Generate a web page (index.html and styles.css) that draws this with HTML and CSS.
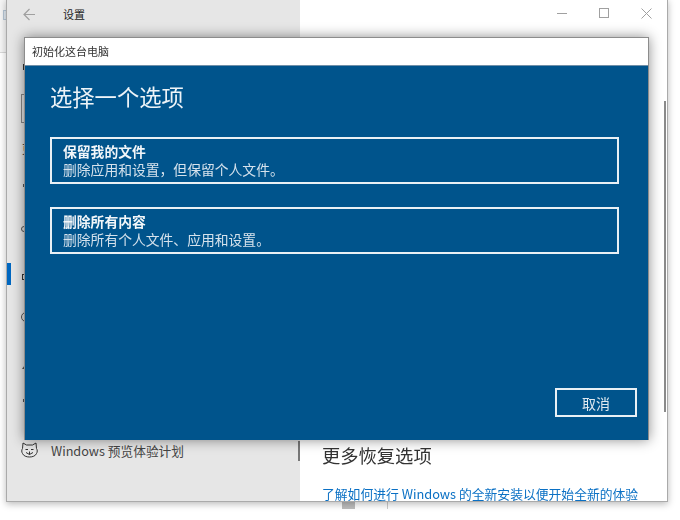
FILE: index.html
```html
<!DOCTYPE html>
<html lang="zh-CN">
<head>
<meta charset="utf-8">
<title>初始化这台电脑</title>
<link rel="stylesheet" href="styles.css">
</head>
<body>
<div class="desktop">
  <div class="stub-left"><span class="stub-icon"></span></div>
  <div class="stub-bottom"></div>
  <div class="stub-line"></div>
  <div class="settings">
    <aside class="sidebar">
      <div class="sidebar-head">
        <svg class="back" width="13" height="13" viewBox="0 0 13 13"><path d="M12 6.500H1M6.500 1 1 6.500 6.500 12"/></svg>
        <span class="app-title">设置</span>
      </div>
      <div class="side-frags">
        <span class="frag frag-home"></span>
        <span class="frag frag-search"></span>
        <span class="frag frag-text">更</span>
        <span class="frag frag-dot frag-dot-a"></span>
        <span class="frag frag-ring"></span>
        <span class="frag-active"></span>
        <span class="frag frag-square"></span>
        <span class="frag frag-circle"></span>
        <span class="frag frag-tri"></span>
        <span class="frag frag-dot frag-dot-b"></span>
      </div>
      <div class="side-item">
        <svg class="cat" width="17" height="16" viewBox="0 0 17 16"><path d="M2 1 5.500 3H11.500L15 1 15.500 6.500C16.500 8 16.500 10 15.500 11.500 14.500 14 11.500 15 8.500 15S2.500 14 1.500 11.500C.5 10 .5 8 1.500 6.500ZM4.500 7.500H7M10 7.500H12.500M5 10.500 8.500 12.500 12 10.500M8.500 9.500V12.500"/></svg>
        <span>Windows 预览体验计划</span>
      </div>
    </aside>
    <main class="content">
      <div class="caption">
        <svg width="11" height="11" viewBox="0 0 11 11"><path d="M0 5.500H10"/></svg>
        <svg width="11" height="11" viewBox="0 0 11 11"><rect x=".5" y=".5" width="9" height="9"/></svg>
        <svg width="11" height="11" viewBox="0 0 11 11"><path d="M.5 .5 10.500 10.500M10.500 .5 .5 10.500"/></svg>
      </div>
      <div class="more">
        <h2>更多恢复选项</h2>
        <a class="link">了解如何进行 Windows 的全新安装以便开始全新的体验</a>
      </div>
      <div class="scroll"></div>
    </main>
  </div>
  <section class="dialog">
    <header class="dialog-title">初始化这台电脑</header>
    <div class="dialog-body">
      <h1>选择一个选项</h1>
      <div class="option">
        <strong>保留我的文件</strong>
        <span>删除应用和设置，但保留个人文件。</span>
      </div>
      <div class="option">
        <strong>删除所有内容</strong>
        <span>删除所有个人文件、应用和设置。</span>
      </div>
      <div class="actions"><button class="cancel">取消</button></div>
    </div>
  </section>
</div>
</body>
</html>
```
FILE: styles.css
```css
* { box-sizing: border-box; }
html, body { margin: 0; height: 100%; background: #fff; }
body { font-family: "Noto Sans CJK SC", "Liberation Sans", sans-serif; overflow: hidden; }
.desktop { position: relative; width: 680px; height: 520px; overflow: hidden; filter: blur(.35px); }
.stub-left { position: absolute; left: 0; top: 0; width: 7px; height: 53px; background: #f5f5f5; border-bottom: 1px solid #d8d8d8; }
.stub-icon { position: absolute; left: 3px; top: 10px; width: 4px; height: 10px; background: #dfe7ef; border: 1px solid #b6c6d6; border-right: 0; }
.stub-bottom { position: absolute; left: 342px; top: 500px; width: 13px; height: 9px; background: #bdbdbd; }
.stub-line { position: absolute; left: 387px; top: 500px; width: 1px; height: 9px; background: #ccc; }
.settings { position: absolute; left: 6px; top: -1px; width: 662px; height: 503px; display: flex; background: #fff; border: 1px solid #aaa; border-top: 0; box-shadow: 0 2px 7px rgba(0,0,0,.28); overflow: visible; }
.sidebar { width: 293px; background: #e6e6e6; display: flex; flex-direction: column; color: #333; }
.sidebar-head { display: flex; align-items: center; height: 30px; padding: 0 0 0 16px; flex: none; }
.back { fill: none; stroke: #a0a0a0; stroke-width: 1.200; margin-right: 27px; }
.app-title { font-size: 11px; color: #222; }
.side-frags { position: relative; height: 412px; flex: none; }
.frag { position: absolute; }
.frag-home { left: 16px; top: 35px; width: 3px; height: 6px; background: #333; }
.frag-search { left: 14px; top: 65px; width: 6px; height: 29px; border: 1px solid #8a8a8a; border-right: 0; }
.frag-text { left: 15px; top: 112px; font-size: 12px; line-height: 16px; color: #222; }
.frag-dot { width: 2px; height: 3px; background: #555; }
.frag-dot-a { left: 16px; top: 155px; }
.frag-dot-b { left: 16px; top: 370px; }
.frag-ring { left: 14px; top: 197px; width: 6px; height: 6px; border: 1px solid #555; border-radius: 50%; }
.frag-active { position: absolute; left: 0; top: 234px; width: 4px; height: 22px; background: #0067c0; }
.frag-square { left: 15px; top: 245px; width: 5px; height: 6px; border: 1px solid #333; }
.frag-circle { left: 14px; top: 283px; width: 10px; height: 10px; border: 1px solid #555; border-radius: 50%; }
.frag-tri { left: 15px; top: 333px; width: 0; height: 0; border-left: 5px solid transparent; border-bottom: 7px solid #555; }
.side-item { display: flex; align-items: center; gap: 13px; padding: 0 0 2px 14px; height: 20px; font-size: 12.700px; color: #444; border-right: 2px solid #777; flex: none; }
.cat { fill: none; stroke: #333; stroke-width: 1; flex: none; }
.content { flex: 1; position: relative; display: flex; flex-direction: column; }
.caption { display: flex; justify-content: flex-end; gap: 31px; padding: 9px 15px 0 0; height: 31px; flex: none; }
.caption svg { fill: none; stroke: #a0a0a0; stroke-width: 1; }
.more { margin-top: auto; padding: 0 0 0 22px; white-space: nowrap; }
.more h2 { margin: 0 0 19px; font-size: 18.300px; font-weight: 400; line-height: 26px; color: #333; }
.link { display: block; font-size: 12.800px; line-height: 14px; color: #0a70c4; }
.scroll { position: absolute; right: 1px; top: 102px; width: 2px; height: 311px; background: #8a8a8a; }
.dialog { position: absolute; left: 24px; top: 37px; width: 625px; height: 403px; display: flex; flex-direction: column; border: 1px solid #8c8c8c; border-width: 1px 1px 0 1px; box-shadow: 0 0 12px rgba(0,0,0,.45); background: #00548c; }
.dialog-title { height: 28px; background: #fff; border-bottom: 1px solid #6f8fa8; padding-left: 7px; font-size: 11px; line-height: 26px; color: #333; flex: none; }
.dialog-body { flex: 1; display: flex; flex-direction: column; padding: 15px 11px 23px 25px; color: #fff; }
.dialog-body h1 { margin: 0 0 26px; font-size: 22.300px; font-weight: 400; line-height: 30px; color: #eef4f8; }
.option { width: 569px; height: 47px; border: 2px solid #e9f0f5; padding: 3px 0 0 11px; display: flex; flex-direction: column; margin-bottom: 23px; font-size: 13.800px; line-height: 18px; color: #d5e2ec; white-space: nowrap; }
.option strong { font-weight: 700; color: #f2f6f9; }
.actions { margin-top: auto; display: flex; justify-content: flex-end; }
.cancel { width: 82px; height: 29px; padding: 0; background: none; border: 2px solid #e9f0f5; color: #dfe9f0; font: 400 14px "Noto Sans CJK SC", sans-serif; }
```
